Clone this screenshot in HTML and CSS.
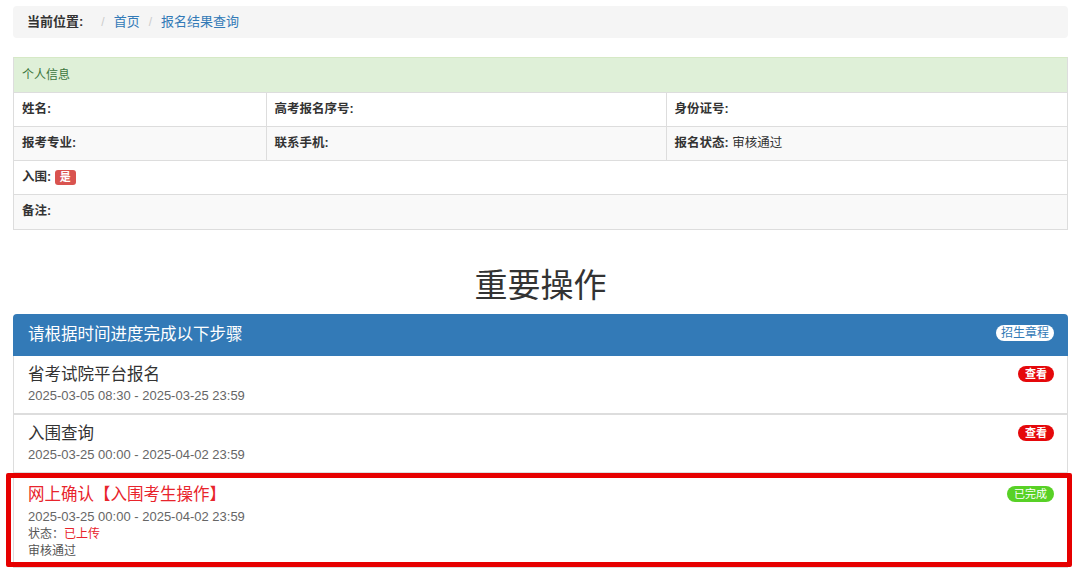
FILE: index.html
```html
<!DOCTYPE html>
<html lang="zh-CN">
<head>
<meta charset="utf-8">
<title>报名结果查询</title>
<link rel="stylesheet" href="styles.css">
</head>
<body>
<div class="container">
  <ol class="breadcrumb">
    <li class="crumb-title">当前位置:</li>
    <li class="sep">/</li>
    <li><a href="#">首页</a></li>
    <li class="sep">/</li>
    <li><a href="#">报名结果查询</a></li>
  </ol>

  <div class="panel info-panel">
    <div class="info-heading">个人信息</div>
    <table class="info-table">
      <colgroup><col class="c1"><col class="c2"><col class="c3"></colgroup>
      <tr>
        <td><b>姓名:</b></td>
        <td><b>高考报名序号:</b></td>
        <td><b>身份证号:</b></td>
      </tr>
      <tr class="striped">
        <td><b>报考专业:</b></td>
        <td><b>联系手机:</b></td>
        <td><b>报名状态:</b> 审核通过</td>
      </tr>
      <tr>
        <td colspan="3"><b>入围:</b> <span class="label-danger">是</span></td>
      </tr>
      <tr class="striped">
        <td colspan="3"><b>备注:</b></td>
      </tr>
    </table>
  </div>

  <h2 class="section-title">重要操作</h2>

  <div class="steps-panel">
    <div class="steps-heading">
      <span class="steps-title">请根据时间进度完成以下步骤</span>
      <span class="badge badge-white">招生章程</span>
    </div>
    <div class="step">
      <div class="step-top">
        <span class="step-name">省考试院平台报名</span>
        <span class="badge badge-red">查看</span>
      </div>
      <div class="step-date">2025-03-05 08:30 - 2025-03-25 23:59</div>
    </div>
    <div class="step">
      <div class="step-top">
        <span class="step-name">入围查询</span>
        <span class="badge badge-red">查看</span>
      </div>
      <div class="step-date">2025-03-25 00:00 - 2025-04-02 23:59</div>
    </div>
    <div class="step step-active">
      <div class="step-top">
        <span class="step-name red">网上确认【入围考生操作】</span>
        <span class="badge badge-green">已完成</span>
      </div>
      <div class="step-date">2025-03-25 00:00 - 2025-04-02 23:59</div>
      <div class="step-note">状态：<span class="red">已上传</span></div>
      <div class="step-note">审核通过</div>
    </div>
  </div>
</div>
</body>
</html>
```

FILE: styles.css
```css
* { box-sizing: border-box; }
html, body { margin: 0; padding: 0; background: #fff; }
body {
  font-family: "Liberation Sans", "Noto Sans CJK SC", sans-serif;
  color: #333;
  font-size: 13px;
}
.container { padding: 6px 12px 0 13px; }

.breadcrumb {
  list-style: none;
  margin: 0;
  background: #f5f5f5;
  border-radius: 4px;
  height: 32px;
  padding: 0 14px;
  display: flex;
  align-items: center;
  font-size: 13px;
  line-height: 16px;
}
.breadcrumb li { display: block; }
.crumb-title { font-weight: bold; color: #333; margin-right: 9px; }
.breadcrumb .sep { color: #ccc; margin: 0 9px; font-size: 12px; }
.breadcrumb a { color: #337ab7; text-decoration: none; }

.info-panel {
  margin-top: 19px;
  border: 1px solid #ddd;
  border-top-color: #d6e9c6;
}
.info-heading {
  background: #dff0d8;
  color: #3c763d;
  height: 34px;
  line-height: 34px;
  padding: 0 8px;
  font-size: 12px;
}
.info-table {
  width: 100%;
  border-collapse: collapse;
  table-layout: fixed;
  font-size: 12.5px;
}
.info-table .c1 { width: 252px; }
.info-table .c2 { width: 400px; }
.info-table td {
  border-top: 1px solid #ddd;
  height: 34px;
  padding: 0 8px;
  vertical-align: middle;
  line-height: 17px;
}
.info-table td + td { border-left: 1px solid #ddd; }
.info-table tr.striped td { background: #f9f9f9; }
.info-table b { font-weight: bold; color: #333; }
.label-danger {
  display: inline-block;
  background: #d9534f;
  color: #fff;
  font-weight: bold;
  font-size: 11px;
  line-height: 15px;
  padding: 0 5px;
  border-radius: 3px;
  vertical-align: 0;
}

.section-title {
  margin: 36px 0 8px;
  text-align: center;
  font-weight: normal;
  font-size: 33px;
  line-height: 40px;
  color: #333;
}

.steps-panel { position: relative; }
.steps-heading {
  background: #337ab7;
  border-radius: 4px 4px 0 0;
  height: 42px;
  padding: 0 14px 0 15px;
  display: flex;
  align-items: center;
  justify-content: space-between;
}
.steps-title { color: #fff; font-size: 16.5px; line-height: 22px; margin-top: -2px; }

.badge {
  display: inline-block;
  font-size: 11px;
  font-weight: bold;
  line-height: 15px;
  padding: 0 5px;
  border-radius: 9px;
  white-space: nowrap;
}
.badge-white { background: #fff; color: #337ab7; font-weight: normal; font-size: 12px; line-height: 16px; padding: 0 5px; margin-top: -4px; }
.badge-red { background: #e5080b; color: #fff; padding: 0 7px; line-height: 16px; }
.badge-green { background: #58d126; color: #fff; padding: 0 7px; line-height: 16px; font-weight: normal; }

.step {
  position: relative;
  border: 1px solid #ddd;
  border-top: none;
  padding: 7px 13px 8px 14px;
}
.step + .step { border-top: 1px solid #ddd; }
.step-top {
  display: flex;
  justify-content: space-between;
  align-items: center;
  height: 22px;
}
.step-name { font-size: 16.5px; line-height: 22px; color: #333; }
.step-date { margin-top: 2px; font-size: 13px; line-height: 18px; color: #666; }
.step-note { font-size: 12px; line-height: 17px; color: #555; }
.red { color: #e8242c; }
.step-active { padding-top: 9px; padding-bottom: 7px; }
.step-active .step-date { margin-top: 3px; }
.step-active::after {
  content: "";
  position: absolute;
  left: -8px;
  right: -5px;
  top: -1px;
  bottom: 0;
  border: 5px solid #e60000;
  border-radius: 2px;
  pointer-events: none;
}
```
